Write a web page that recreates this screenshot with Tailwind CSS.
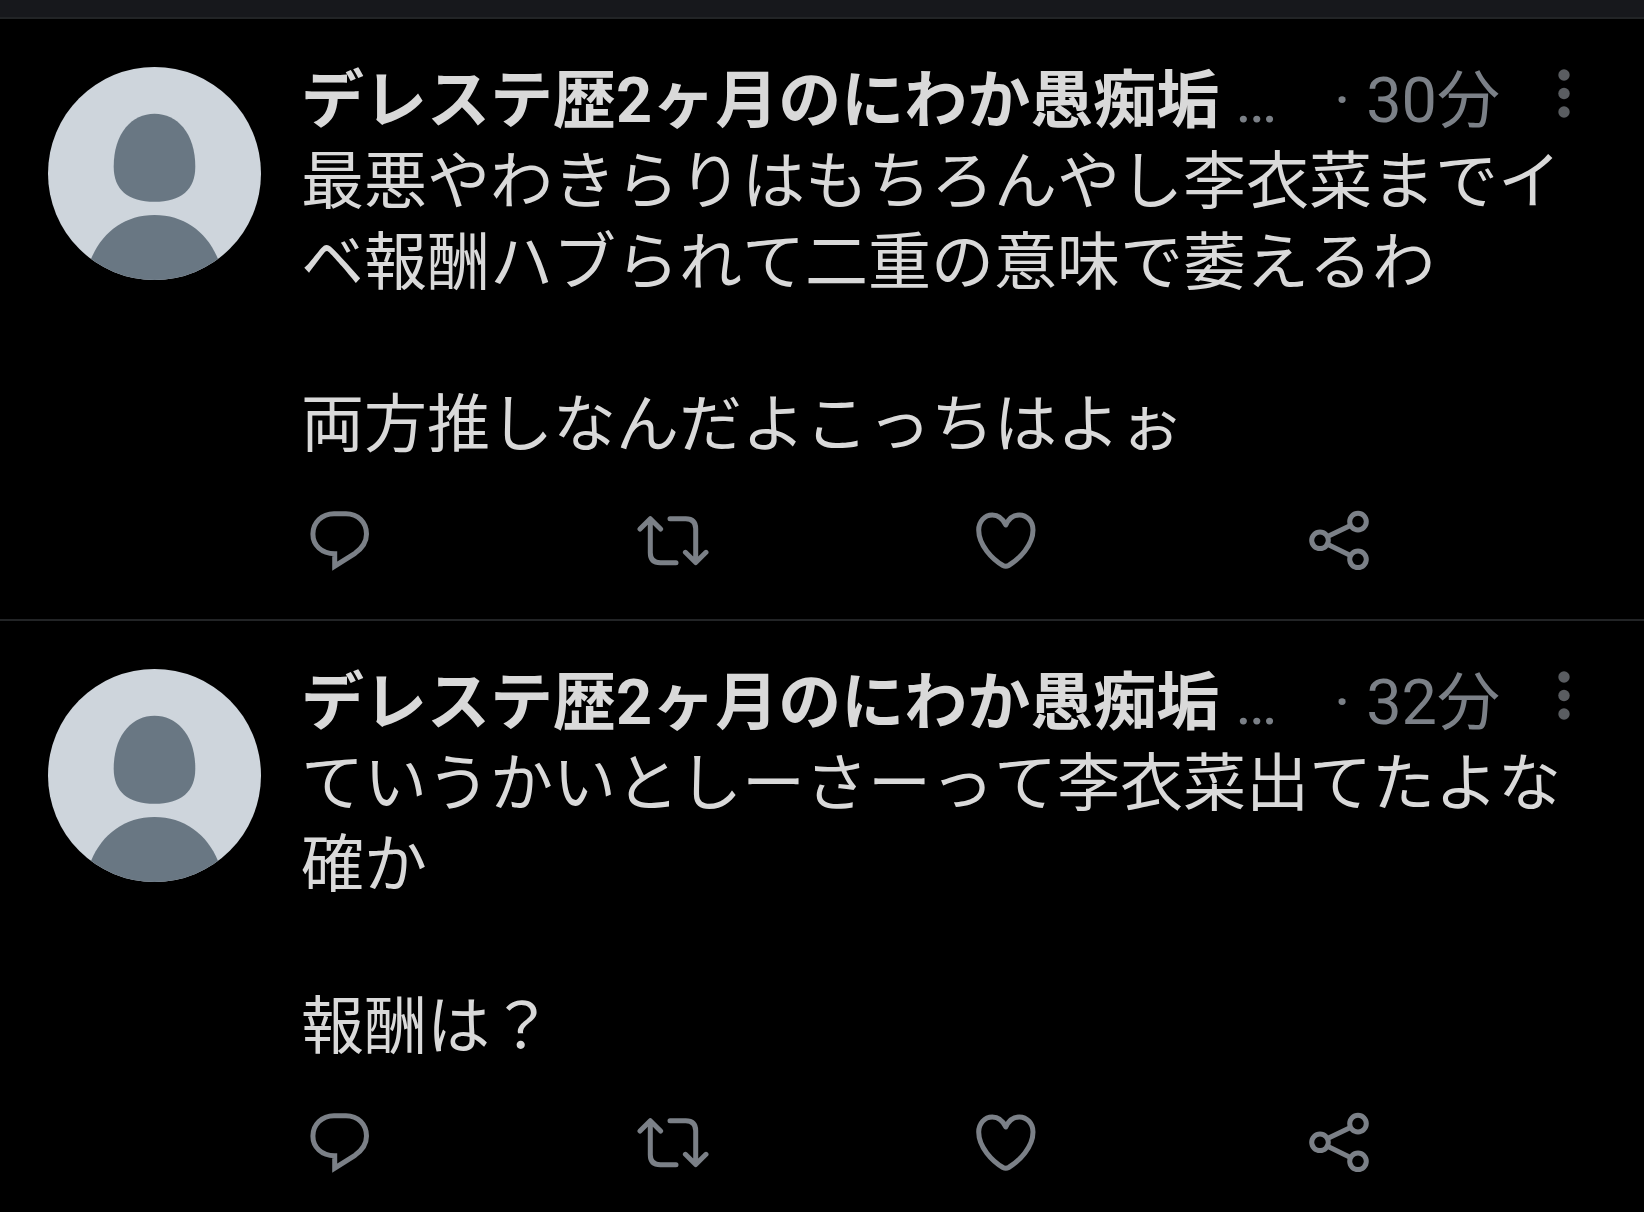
<!DOCTYPE html>
<html lang="ja">
  <head>
    <meta charset="UTF-8" />
    <meta name="viewport" content="width=device-width, initial-scale=1.0" />
    <script src="https://cdn.jsdelivr.net/npm/@tailwindcss/browser@4"></script>
    <title>ツイート</title>
    <style>
      body {
        font-family: Roboto, "Noto Sans CJK JP", sans-serif;
      }
      p {
        font-kerning: none;
      }
    </style>
  </head>
  <body class="bg-black text-[#d9d9d9] text-[63px] leading-[81px]">
    <!-- shared icons -->
    <svg class="hidden" aria-hidden="true">
      <symbol id="avatar" viewBox="0 0 213 213">
        <rect width="213" height="213" fill="#ced5dc" />
        <path
          fill="#697783"
          d="M106.5 46.7C84 46.7 65.7 66 65.7 99.5C65.7 123 80 134.8 106.5 134.8S147.3 123 147.3 99.5C147.3 66 129 46.7 106.5 46.7Z"
        />
        <path
          fill="#697783"
          d="M43 192C54 165 77 148 106.5 148S159 165 170 192V213H43Z"
        />
      </symbol>
      <symbol id="reply" viewBox="0 0 72 72">
        <path
          d="M30 9.7H42C54 9.7 62.5 18.5 62.5 30C62.5 38 58.5 44 51 49.3L30.7 62.2V49.7C17.5 49.7 8.9 41 8.9 30C8.9 18.5 18 9.7 30 9.7Z"
        />
      </symbol>
      <symbol id="retweet" viewBox="0 0 72 72">
        <path
          stroke-linecap="round"
          stroke-linejoin="round"
          d="M3 25L13.3 14.7L23.6 25M13.3 15V48.7Q13.3 58.7 23.3 58.7H39M33 14.7H48.7Q58.7 14.7 58.7 24.7V58M48.4 48.3L58.7 58.6L69 48.3"
        />
      </symbol>
      <symbol id="heart" viewBox="0 0 72 72">
        <path
          stroke-linejoin="round"
          d="M35.8 21C33 15 28.5 11 22.3 11C14.5 11 8.7 17.5 8.7 26C8.7 41 22 55 33 61.5Q35.8 63 38.6 61.5C49.5 55 63 41 63 26C63 17.5 57 11 49.3 11C43 11 38.6 15 35.8 21Z"
        />
      </symbol>
      <symbol id="share" viewBox="0 0 72 72">
        <circle cx="17" cy="36.3" r="8.3" />
        <circle cx="55" cy="17.6" r="8.3" />
        <circle cx="55" cy="55.3" r="8.3" />
        <path d="M24.5 32.5L47.5 21.4M24.5 40.2L47.5 51.4" />
      </symbol>
      <symbol id="more" viewBox="0 0 32 54">
        <circle cx="16" cy="8" r="5.7" />
        <circle cx="16" cy="26.5" r="5.7" />
        <circle cx="16" cy="45" r="5.7" />
      </symbol>
    </svg>

    <header class="h-[19px] bg-[#17181c] border-b-2 border-[#222426]"></header>

    <main>
      <article
        class="flex gap-10 pt-[41px] pb-[43px] pl-12 pr-16 border-b-2 border-[#222426]"
      >
        <a href="#" class="shrink-0 mt-[7px]" aria-label="プロフィール">
          <svg class="size-[213px] rounded-full"><use href="#avatar" /></svg>
        </a>
        <div class="flex-1 min-w-0">
          <div class="flex items-start whitespace-nowrap">
            <h2 class="font-bold">デレステ歴2ヶ月のにわか愚痴垢</h2>
            <span class="ml-4 text-[#7b8087]">…</span>
            <time class="ml-auto text-[#7b8087]">· 30分</time>
            <button type="button" class="ml-12 mt-[7px]" aria-label="その他">
              <svg class="w-8 h-[54px] fill-[#5a5d61]">
                <use href="#more" />
              </svg>
            </button>
          </div>
          <p>最悪やわきらりはもちろんやし李衣菜までイベ報酬ハブられて二重の意味で萎えるわ</p>
          <p class="mt-[81px]">両方推しなんだよこっちはよぉ</p>
          <div
            class="flex justify-between mt-[39px] ml-[3px] mr-[205px] fill-none stroke-[#7b8087] stroke-5"
          >
            <button type="button" aria-label="返信">
              <svg class="size-[72px]"><use href="#reply" /></svg>
            </button>
            <button type="button" aria-label="リツイート">
              <svg class="size-[72px]"><use href="#retweet" /></svg>
            </button>
            <button type="button" aria-label="いいね">
              <svg class="size-[72px]"><use href="#heart" /></svg>
            </button>
            <button type="button" aria-label="共有">
              <svg class="size-[72px]"><use href="#share" /></svg>
            </button>
          </div>
        </div>
      </article>

      <article class="flex gap-10 pt-[41px] pb-8 pl-12 pr-16">
        <a href="#" class="shrink-0 mt-[7px]" aria-label="プロフィール">
          <svg class="size-[213px] rounded-full"><use href="#avatar" /></svg>
        </a>
        <div class="flex-1 min-w-0">
          <div class="flex items-start whitespace-nowrap">
            <h2 class="font-bold">デレステ歴2ヶ月のにわか愚痴垢</h2>
            <span class="ml-4 text-[#7b8087]">…</span>
            <time class="ml-auto text-[#7b8087]">· 32分</time>
            <button type="button" class="ml-12 mt-[7px]" aria-label="その他">
              <svg class="w-8 h-[54px] fill-[#5a5d61]">
                <use href="#more" />
              </svg>
            </button>
          </div>
          <p>ていうかいとしーさーって李衣菜出てたよな確か</p>
          <p class="mt-[81px]">報酬は？</p>
          <div
            class="flex justify-between mt-[39px] ml-[3px] mr-[205px] fill-none stroke-[#7b8087] stroke-5"
          >
            <button type="button" aria-label="返信">
              <svg class="size-[72px]"><use href="#reply" /></svg>
            </button>
            <button type="button" aria-label="リツイート">
              <svg class="size-[72px]"><use href="#retweet" /></svg>
            </button>
            <button type="button" aria-label="いいね">
              <svg class="size-[72px]"><use href="#heart" /></svg>
            </button>
            <button type="button" aria-label="共有">
              <svg class="size-[72px]"><use href="#share" /></svg>
            </button>
          </div>
        </div>
      </article>
    </main>
  </body>
</html>
